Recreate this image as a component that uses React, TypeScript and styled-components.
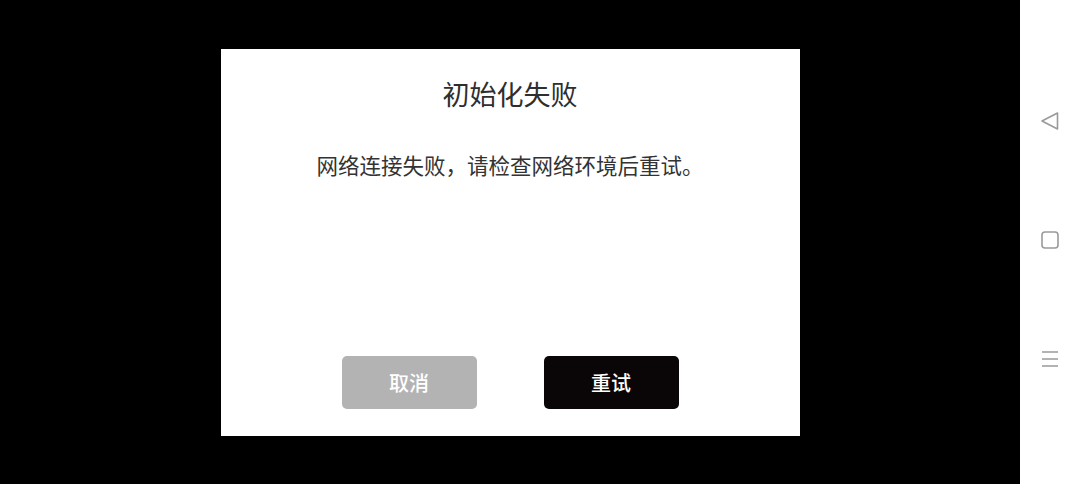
import styled, { createGlobalStyle } from "styled-components"

const GlobalStyle = createGlobalStyle`
  html, body {
    margin: 0;
    padding: 0;
    background: #000;
  }
  body {
    font-family: "Noto Sans CJK SC", "Noto Sans", sans-serif;
  }
`

const Screen = styled.div`
  display: flex;
  width: 1080px;
  height: 484px;
  overflow: hidden;
`

const Stage = styled.main`
  flex: 1;
  display: grid;
  place-items: center;
  background: #000;
`

const Dialog = styled.section`
  display: flex;
  flex-direction: column;
  align-items: center;
  box-sizing: border-box;
  width: 579px;
  height: 387px;
  padding: 26px 0 27px;
  background: #fff;
`

const Title = styled.h1`
  margin: 0;
  font-size: 27px;
  font-weight: 400;
  line-height: 38px;
  color: #2e2e2e;
`

const Message = styled.p`
  margin: 37px 0 0;
  font-size: 21.5px;
  font-weight: 400;
  line-height: 30px;
  color: #333;
`

const Actions = styled.div`
  display: flex;
  gap: 67px;
  margin-top: auto;
`

const Button = styled.button<{ $primary?: boolean }>`
  width: 135px;
  height: 53px;
  border: none;
  border-radius: 5px;
  font-family: inherit;
  font-size: 20px;
  font-weight: 500;
  color: #fff;
  background: ${(p) => (p.$primary ? "#0a0506" : "#b3b3b3")};
  cursor: pointer;
`

const NavBar = styled.nav`
  width: 60px;
  display: flex;
  flex-direction: column;
  align-items: center;
  justify-content: center;
  gap: 99px;
  background: #fff;
  padding-bottom: 4px;
  box-sizing: border-box;
`

const NavIcon = styled.svg`
  width: 20px;
  height: 20px;
  display: block;
  color: #9a9a9a;
`

export default function App() {
  return (
    <>
      <GlobalStyle />
      <Screen>
        <Stage>
          <Dialog>
            <Title>初始化失败</Title>
            <Message>网络连接失败，请检查网络环境后重试。</Message>
            <Actions>
              <Button>取消</Button>
              <Button $primary>重试</Button>
            </Actions>
          </Dialog>
        </Stage>
        <NavBar>
          <NavIcon viewBox="0 0 20 20">
            <path
              d="M17.5 2 L2 10 L17.5 18 Z"
              fill="none"
              stroke="currentColor"
              strokeWidth="1.6"
              strokeLinejoin="round"
            />
          </NavIcon>
          <NavIcon viewBox="0 0 20 20">
            <rect x="2" y="2" width="16" height="16" rx="3" fill="none" stroke="currentColor" strokeWidth="1.6" />
          </NavIcon>
          <NavIcon viewBox="0 0 20 20">
            <path d="M2 3 H18 M2 10 H18 M2 17 H18" stroke="currentColor" strokeWidth="1.6" />
          </NavIcon>
        </NavBar>
      </Screen>
    </>
  )
}
